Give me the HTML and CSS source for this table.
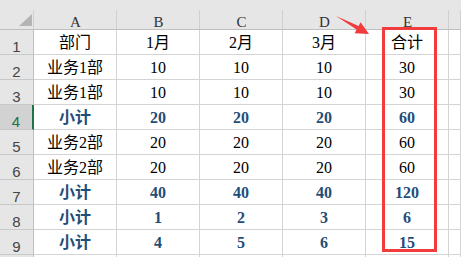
FILE: index.html
```html
<!DOCTYPE html>
<html lang="zh-CN">
<head>
<meta charset="utf-8">
<title>合计</title>
<link rel="stylesheet" href="styles.css">
</head>
<body>
<div class="sheet">
  <div class="corner"><span class="tri"></span></div>
  <div class="col-head">A</div>
  <div class="col-head">B</div>
  <div class="col-head">C</div>
  <div class="col-head">D</div>
  <div class="col-head">E</div>
  <div class="col-head"></div>

  <div class="row-head">1</div>
  <div class="c">部门</div><div class="c">1月</div><div class="c">2月</div><div class="c">3月</div><div class="c">合计</div><div class="c"></div>

  <div class="row-head">2</div>
  <div class="c">业务1部</div><div class="c">10</div><div class="c">10</div><div class="c">10</div><div class="c">30</div><div class="c"></div>

  <div class="row-head">3</div>
  <div class="c">业务1部</div><div class="c">10</div><div class="c">10</div><div class="c">10</div><div class="c">30</div><div class="c"></div>

  <div class="row-head active">4</div>
  <div class="c b">小计</div><div class="c b">20</div><div class="c b">20</div><div class="c b">20</div><div class="c b">60</div><div class="c"></div>

  <div class="row-head">5</div>
  <div class="c">业务2部</div><div class="c">20</div><div class="c">20</div><div class="c">20</div><div class="c">60</div><div class="c"></div>

  <div class="row-head">6</div>
  <div class="c">业务2部</div><div class="c">20</div><div class="c">20</div><div class="c">20</div><div class="c">60</div><div class="c"></div>

  <div class="row-head">7</div>
  <div class="c b">小计</div><div class="c b">40</div><div class="c b">40</div><div class="c b">40</div><div class="c b">120</div><div class="c"></div>

  <div class="row-head">8</div>
  <div class="c b">小计</div><div class="c b">1</div><div class="c b">2</div><div class="c b">3</div><div class="c b">6</div><div class="c"></div>

  <div class="row-head">9</div>
  <div class="c b">小计</div><div class="c b">4</div><div class="c b">5</div><div class="c b">6</div><div class="c b">15</div><div class="c"></div>

  <!-- top edge of the next row, scrolled mostly out of view -->
  <div class="row-head"></div>
  <div class="c"></div><div class="c"></div><div class="c"></div><div class="c"></div><div class="c"></div><div class="c"></div>

  <!-- callout: arrow pointing at the total column, and the frame around it -->
  <svg class="mark" width="461" height="257" viewBox="0 0 461 257">
    <polygon points="336,16 358.6,26 360.6,22.3 369,34 354.6,33.3 356.6,29.6" fill="#f03c3c"/>
    <rect x="383.5" y="28.5" width="52" height="222" fill="none" stroke="#f03c3c" stroke-width="3"/>
  </svg>
</div>
</body>
</html>
```

FILE: styles.css
```css
html, body {
  margin: 0;
  padding: 0;
  background: #fff;
  overflow: hidden;
}

.sheet {
  position: relative;
  width: 461px;
  height: 257px;
  overflow: hidden;
  display: grid;
  grid-template-columns: 34px repeat(5, 83px) 1fr;
  grid-template-rows: 30px repeat(10, 25px);
  font-family: "Liberation Serif", "Noto Sans CJK SC", serif;
  font-size: 16px;
  color: #000;
}

.sheet > div {
  box-sizing: border-box;
}

/* header strip: short separators that start below the top edge */
.corner,
.col-head {
  background-color: #e6e6e6;
  background-image: linear-gradient(#d0d0d0, #d0d0d0);
  background-size: 1px 19px;
  background-position: right bottom;
  background-repeat: no-repeat;
  border-bottom: 1px solid #bfbfbf;
}

.corner {
  display: flex;
  justify-content: flex-end;
  align-items: flex-end;
  padding: 0 2px 3px 0;
}

.tri {
  width: 13px;
  height: 12px;
  background: #b4b4b4;
  clip-path: polygon(100% 0, 100% 100%, 0 100%);
}

.col-head {
  text-align: center;
  font-size: 15px;
  line-height: 15px;
  padding-top: 15px;
  color: #333;
}

.row-head {
  background: #e6e6e6;
  border-right: 1px solid #bfbfbf;
  border-bottom: 1px solid #c8c8c8;
  text-align: center;
  font-family: "Liberation Sans", sans-serif;
  font-size: 15px;
  line-height: 15px;
  padding-top: 9px;
  color: #444;
}

.row-head.active {
  background: #d2d2d2;
  color: #217346;
  border-right: 2px solid #217346;
}

.c {
  border-right: 1px solid #d4d4d4;
  border-bottom: 1px solid #d4d4d4;
  text-align: center;
  line-height: 22px;
  padding-top: 2px;
  white-space: nowrap;
}

.c.b {
  font-weight: bold;
  color: #1f4e79;
}

.mark {
  position: absolute;
  left: 0;
  top: 0;
  pointer-events: none;
}
```
